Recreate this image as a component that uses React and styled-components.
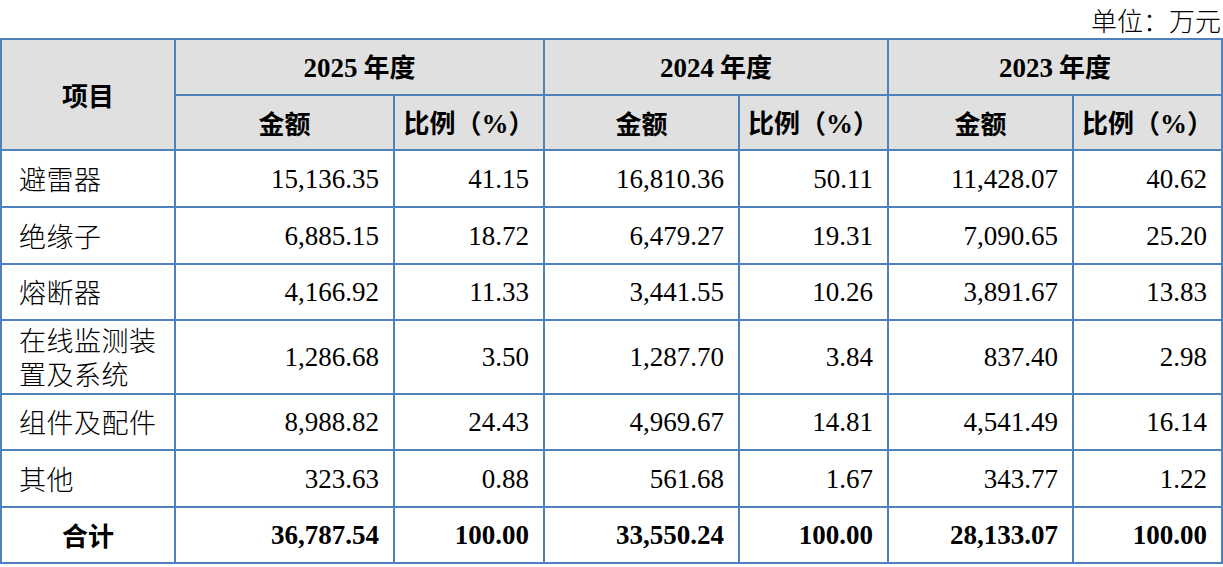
import React from "react";
import styled, { createGlobalStyle } from "styled-components";

const rows = [
  { name: "避雷器", h: 57, values: ["15,136.35", "41.15", "16,810.36", "50.11", "11,428.07", "40.62"] },
  { name: "绝缘子", h: 57, values: ["6,885.15", "18.72", "6,479.27", "19.31", "7,090.65", "25.20"] },
  { name: "熔断器", h: 56, values: ["4,166.92", "11.33", "3,441.55", "10.26", "3,891.67", "13.83"] },
  { name: "在线监测装置及系统", h: 74, values: ["1,286.68", "3.50", "1,287.70", "3.84", "837.40", "2.98"] },
  { name: "组件及配件", h: 56, values: ["8,988.82", "24.43", "4,969.67", "14.81", "4,541.49", "16.14"] },
  { name: "其他", h: 57, values: ["323.63", "0.88", "561.68", "1.67", "343.77", "1.22"] },
];

const total = ["36,787.54", "100.00", "33,550.24", "100.00", "28,133.07", "100.00"];
const years = ["2025", "2024", "2023"];
const widths = [174, 219, 150, 195, 149, 185, 149];

function App() {
  return (
    <Page>
      <GlobalStyle />
      <Unit>单位：万元</Unit>
      <Table>
        <colgroup>
          {widths.map((w, i) => (
            <col key={i} style={{ width: w }} />
          ))}
        </colgroup>
        <thead>
          <HeadRow $h={56}>
            <HeadCell rowSpan={2}>项目</HeadCell>
            {years.map((y) => (
              <HeadCell key={y} colSpan={2}>
                <Num>{y}</Num> 年度
              </HeadCell>
            ))}
          </HeadRow>
          <HeadRow $h={55}>
            {years.map((y) => (
              <React.Fragment key={y}>
                <HeadCell>金额</HeadCell>
                <HeadCell>
                  比例（<Num>%</Num>）
                </HeadCell>
              </React.Fragment>
            ))}
          </HeadRow>
        </thead>
        <tbody>
          {rows.map((r) => (
            <BodyRow key={r.name} $h={r.h}>
              <NameCell>{r.name}</NameCell>
              {r.values.map((v, i) => (
                <NumCell key={i}>{v}</NumCell>
              ))}
            </BodyRow>
          ))}
          <BodyRow $h={56}>
            <TotalName>合计</TotalName>
            {total.map((v, i) => (
              <NumCell key={i} $bold>
                {v}
              </NumCell>
            ))}
          </BodyRow>
        </tbody>
      </Table>
    </Page>
  );
}

const GlobalStyle = createGlobalStyle`
  body {
    margin: 0;
    background: #ffffff;
    color: #000000;
    font-family: "Liberation Serif", "Noto Sans CJK SC", serif;
  }
`;

const Page = styled.div`
  width: 1223px;
  height: 567px;
  overflow: hidden;
`;

const Unit = styled.div`
  height: 38px;
  padding-right: 2px;
  text-align: right;
  font-family: "Noto Sans CJK SC", sans-serif;
  font-size: 26px;
  line-height: 40px;
  font-weight: 300;
`;

const Table = styled.table`
  width: 1222px;
  table-layout: fixed;
  border-collapse: collapse;
`;

const HeadRow = styled.tr`
  height: ${(p) => p.$h}px;
  background: #e0e0e0;
`;

const BodyRow = styled.tr`
  height: ${(p) => p.$h}px;
`;

const Cell = styled.td`
  border: 2px solid #4f81bd;
  padding: 0;
  font-size: 27px;
  line-height: 32px;
`;

const HeadCell = styled(Cell).attrs({ as: "th" })`
  text-align: center;
  font-family: "Noto Sans CJK SC", sans-serif;
  font-weight: 700;
  font-size: 26px;
`;

const Num = styled.span`
  font-family: "Liberation Serif", serif;
  font-weight: 700;
  font-size: 27px;
`;

const NameCell = styled(Cell)`
  padding: 0 12px 0 17px;
  font-family: "Noto Sans CJK SC", sans-serif;
  font-weight: 300;
  font-size: 27px;
  letter-spacing: 0.5px;
  line-height: 34px;
`;

const TotalName = styled(Cell)`
  text-align: center;
  font-family: "Noto Sans CJK SC", sans-serif;
  font-weight: 700;
  font-size: 26px;
`;

const NumCell = styled(Cell)`
  text-align: right;
  padding-right: 14px;
  font-family: "Liberation Serif", serif;
  font-weight: ${(p) => (p.$bold ? 700 : 400)};
`;

export default App;
